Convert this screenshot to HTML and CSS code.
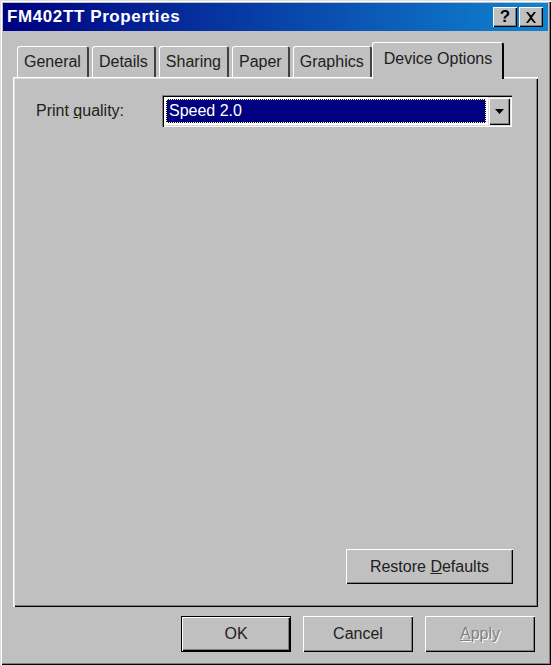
FILE: index.html
```html
<!DOCTYPE html>
<html lang="en">
<head>
    <meta charset="UTF-8">
    <title>FM402TT Properties</title>
    <link rel="stylesheet" href="styles.css">
</head>
<body>
    <div class="window">
        <div class="titlebar">
            <span class="title">FM402TT Properties</span>
            <div class="title-buttons">
                <div class="tbtn">?</div>
                <div class="tbtn close">
                    <svg width="12" height="11" viewBox="0 0 12 11"><path d="M1 0h2l3 3.5 3-3.5h2l-4 5.5 4 5.5h-2l-3-3.5-3 3.5h-2l4-5.5z" fill="#000"/></svg>
                </div>
            </div>
        </div>

        <div class="tabs">
            <div class="tab">General</div>
            <div class="tab">Details</div>
            <div class="tab">Sharing</div>
            <div class="tab">Paper</div>
            <div class="tab">Graphics</div>
            <div class="tab active">Device Options</div>
        </div>

        <div class="panel">
            <div class="row">
                <label class="label">Print <u>q</u>uality:</label>
                <div class="combo">
                    <div class="combo-value"><span>Speed 2.0</span></div>
                    <div class="combo-arrow">
                        <svg width="9" height="5" viewBox="0 0 9 5"><path d="M0 0h9l-4.5 5z" fill="#000"/></svg>
                    </div>
                </div>
            </div>
            <div class="panel-foot">
                <button class="btn restore">Restore <u>D</u>efaults</button>
            </div>
        </div>

        <div class="footer">
            <button class="btn default">OK</button>
            <button class="btn">Cancel</button>
            <button class="btn disabled"><u>A</u>pply</button>
        </div>
    </div>
</body>
</html>
```

FILE: styles.css
```css
body { margin: 0; padding: 0; background: #c0c0c0; font-family: "Liberation Sans", Arial, sans-serif; font-size: 16px; color: #000; }
.window { width: 551px; height: 665px; box-sizing: border-box; padding: 3px; background: #c0c0c0; display: flex; flex-direction: column;
    box-shadow: inset 1px 1px 0 #dfdfdf, inset 2px 2px 0 #fff, inset -1px -1px 0 #000, inset -2px -2px 0 #808080; }

.titlebar { height: 28px; display: flex; align-items: center; justify-content: space-between; padding: 0 5px 0 4px; background: linear-gradient(to right, #000080, #1084d0); }
.title { color: #fff; font-weight: bold; font-size: 17px; letter-spacing: 0.6px; }
.title-buttons { display: flex; gap: 2px; }
.tbtn { width: 24px; height: 20px; box-sizing: border-box; background: #c0c0c0; display: flex; align-items: center; justify-content: center; font-weight: bold; font-size: 17px;
    box-shadow: inset 1px 1px 0 #fff, inset -1px -1px 0 #000, inset -2px -2px 0 #808080; }

.tabs { display: flex; align-items: flex-end; height: 46px; padding-left: 13px; position: relative; z-index: 1; }
.tab { height: 31px; box-sizing: border-box; padding: 0 6px; display: flex; align-items: center; margin-right: 3px; white-space: nowrap; color: #202020;
    border-top: 1px solid #fff; border-left: 1px solid #fff; border-right: 2px solid #404040; border-radius: 3px 3px 0 0; }
.tab:first-child { margin-left: 1px; }
.tab.active { height: 37px; margin-bottom: -2px; padding: 0 10px 4px 11px; margin-left: -3px; border-right-color: #000; background: #c0c0c0; }

.panel { margin: 0 10px 0 10px; height: 530px; box-sizing: border-box; display: flex; flex-direction: column; justify-content: space-between; padding: 18px 24px 23px 23px;
    box-shadow: inset 1px 1px 0 #fff, inset 2px 2px 0 #dfdfdf, inset -1px -1px 0 #000, inset -2px -2px 0 #808080; }
.row { display: flex; align-items: center; }
.label { width: 126px; color: #202020; }
.combo { width: 350px; height: 32px; box-sizing: border-box; padding: 2px; background: #fff; display: flex; align-items: stretch;
    box-shadow: inset 1px 1px 0 #808080, inset 2px 2px 0 #000, inset -1px -1px 0 #fff, inset -2px -2px 0 #dfdfdf; }
.combo-value { flex: 1; margin: 2px; background: #000080; color: #fff; outline: 1px dotted #ffff80; outline-offset: -1px; display: flex; align-items: center; padding-left: 3px; }
.combo-arrow { width: 22px; background: #c0c0c0; display: flex; align-items: center; justify-content: center;
    box-shadow: inset 1px 1px 0 #dfdfdf, inset 2px 2px 0 #fff, inset -1px -1px 0 #000, inset -2px -2px 0 #808080; }

.panel-foot { display: flex; justify-content: flex-end; }
.btn { font-family: inherit; font-size: 16px; color: #202020; background: #c0c0c0; border: none; height: 36px; padding: 0; width: 110px;
    box-shadow: inset 1px 1px 0 #fff, inset -1px -1px 0 #000, inset -2px -2px 0 #808080; }
.btn.restore { width: 167px; height: 35px; margin-right: 1px; }
.btn.default { box-shadow: inset 0 0 0 1px #000, inset 2px 2px 0 #fff, inset -2px -2px 0 #000, inset -3px -3px 0 #808080; }
.btn.disabled { color: #808080; text-shadow: 1px 1px 0 #fff; }

.footer { display: flex; justify-content: flex-end; gap: 12px; padding: 9px 13px 0 0; }
```
